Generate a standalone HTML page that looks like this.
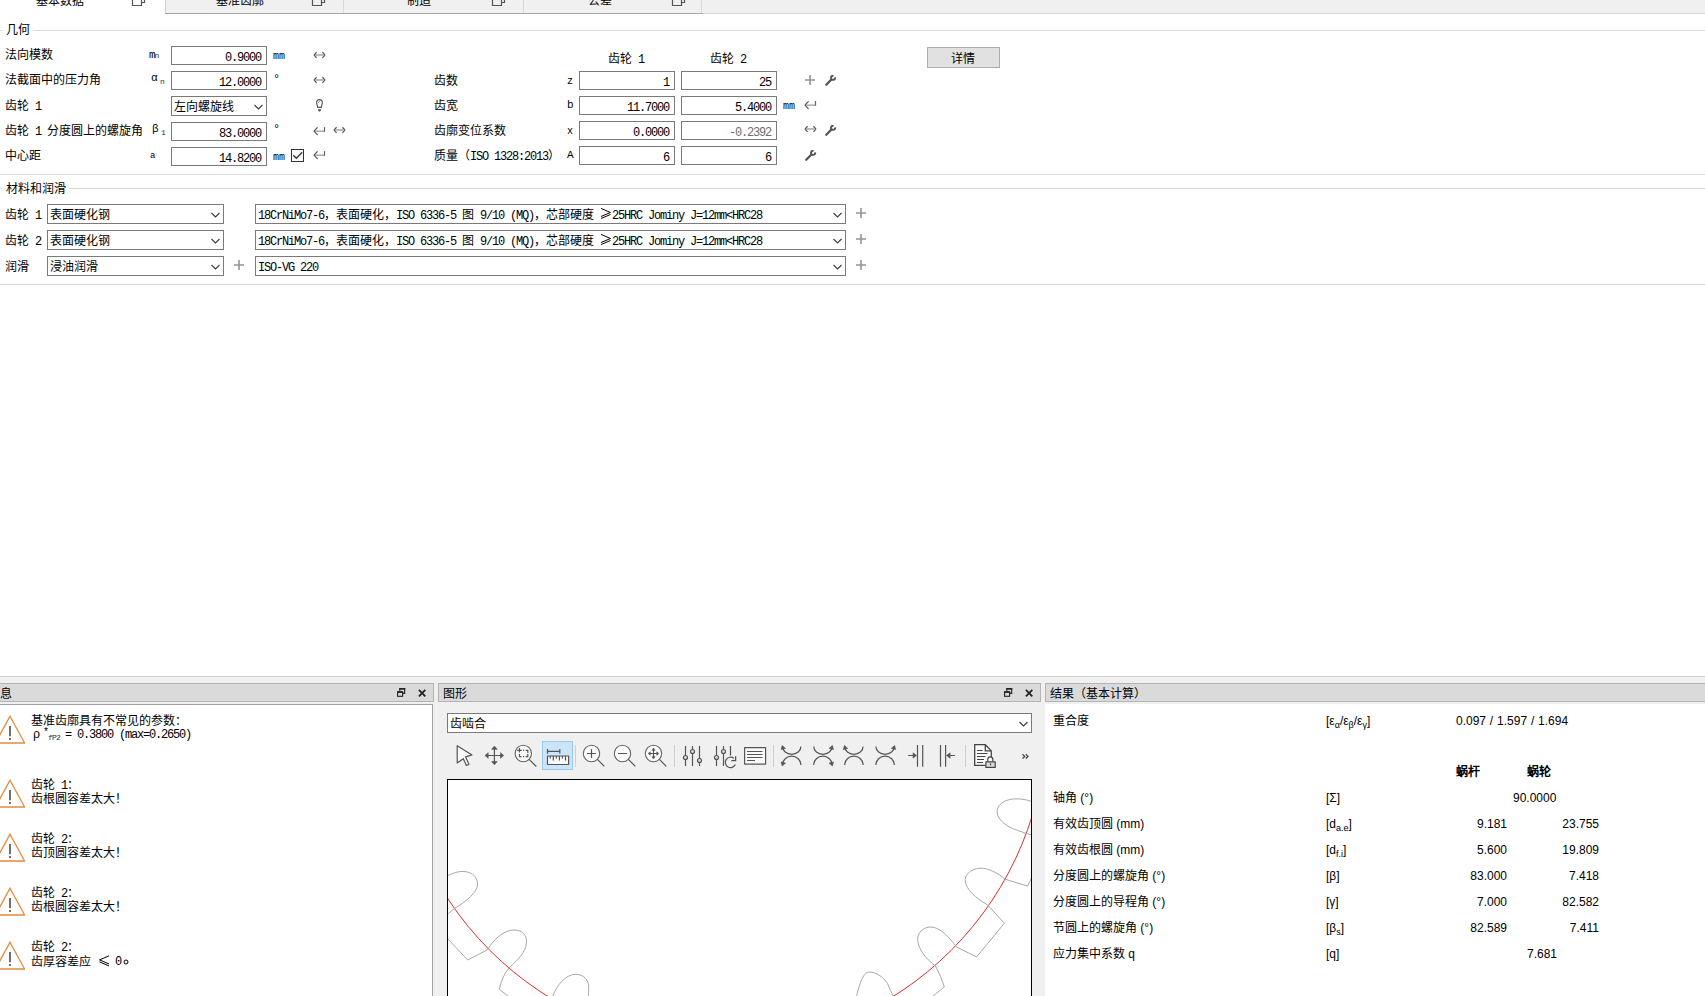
<!DOCTYPE html>
<html lang="zh-CN"><head><meta charset="utf-8">
<style>
*{box-sizing:border-box}
html,body{margin:0;padding:0}
body{width:1705px;height:996px;overflow:hidden;position:relative;background:#fff;font-family:"Liberation Sans",sans-serif;font-size:12px;color:#000}
.a{position:absolute;white-space:nowrap}
.t{position:absolute;white-space:nowrap;line-height:16px;height:16px}
.m{font-family:"Liberation Mono",monospace;letter-spacing:-1.2px}
.inp{position:absolute;border:1px solid #7a7a7a;background:#fff;height:19px;width:96px;line-height:17px;padding-top:3px;text-align:right;padding-right:5px}
.cmb{position:absolute;border:1px solid #7a7a7a;background:#fff;height:20px;line-height:18px;padding-left:2px;padding-top:1px}
.chev{position:absolute;right:3px;top:7px}
.gl{position:absolute;height:1px;background:#dcdcdc}
.hdr{position:absolute;top:683px;height:19px;background:#dadada;border:1px solid #b4b4b4;line-height:17px;padding-left:4px;padding-top:2px}
svg{position:absolute;overflow:visible}
.ic{fill:none;stroke:#707070;stroke-width:1.3}
.r{position:absolute;white-space:nowrap;line-height:16px;height:16px}
.rr{position:absolute;white-space:nowrap;line-height:16px;height:16px;text-align:right}
sub{font-size:9px;vertical-align:-3px;line-height:0}
</style></head><body>
<svg width="0" height="0" style="position:absolute">
<defs>
<symbol id="lr" viewBox="0 0 14 8"><path d="M2.2 4H10.6" stroke="#a0a0a0" stroke-width="1.4" fill="none"/><path d="M3.6 1.2Q2.4 2.2 1.1 4Q2.4 5.8 3.6 6.8M9.4 1.2Q10.6 2.2 11.9 4Q10.6 5.8 9.4 6.8" fill="none" stroke="#555" stroke-width="1.2"/></symbol>
<symbol id="ret" viewBox="0 0 14 9"><path d="M2.4 4.2H11" stroke="#a0a0a0" stroke-width="1.4" fill="none"/><path d="M11.5 0V4.8" stroke="#666" stroke-width="1.2" fill="none"/><path d="M4.6 0.4Q2.8 2 1.1 4.2Q2.8 6.3 4.6 7.8" fill="none" stroke="#555" stroke-width="1.2"/></symbol>
<symbol id="plus" viewBox="0 0 10 10"><path d="M5 0V10M0 5H10" fill="none" stroke="#959595" stroke-width="1.6"/></symbol>
<symbol id="wr" viewBox="0 0 12 12"><path d="M1.3 9.7L6.4 4.5" stroke="#555" stroke-width="2.3" stroke-linecap="round" fill="none"/><path d="M10.15 2.36A2.1 2.1 0 1 1 8.54 0.75" stroke="#555" stroke-width="1.9" fill="none"/></symbol>
</defs></svg>

<!-- tabs -->
<div class="a" style="left:165px;top:0;width:1540px;height:14px;background:#f0f0f0;border-bottom:1px solid #d8d8d8;border-left:1px solid #d0d0d0"></div><div class="a" style="left:165px;top:13px;width:538px;height:1px;background:#a8a8a8"></div>
<div class="a" style="left:343px;top:0;width:1px;height:13px;background:#d8d8d8"></div>
<div class="a" style="left:523px;top:0;width:1px;height:13px;background:#d8d8d8"></div>
<div class="a" style="left:701px;top:0;width:1px;height:13px;background:#d8d8d8"></div>
<div class="t" style="left:36px;top:-7px">基本数据</div>
<div class="t" style="left:216px;top:-7px">基准齿廓</div>
<div class="t" style="left:407px;top:-7px">制造</div>
<div class="t" style="left:588px;top:-7px">公差</div>
<svg style="left:132px;top:-7px" width="14" height="14"><path d="M0.5 3.5V12.5H9.5V3.5M9.5 9.5H12.5V0" fill="none" stroke="#555" stroke-width="1.2"/></svg>
<svg style="left:312px;top:-7px" width="14" height="14"><path d="M0.5 3.5V12.5H9.5V3.5M9.5 9.5H12.5V0" fill="none" stroke="#555" stroke-width="1.2"/></svg>
<svg style="left:492px;top:-7px" width="14" height="14"><path d="M0.5 3.5V12.5H9.5V3.5M9.5 9.5H12.5V0" fill="none" stroke="#555" stroke-width="1.2"/></svg>
<svg style="left:672px;top:-7px" width="14" height="14"><path d="M0.5 3.5V12.5H9.5V3.5M9.5 9.5H12.5V0" fill="none" stroke="#555" stroke-width="1.2"/></svg>

<!-- group geometry -->
<div class="gl" style="left:0;top:30px;width:3px"></div>
<div class="gl" style="left:33px;top:30px;width:1672px"></div>
<div class="t" style="left:6px;top:22px">几何</div>

<div class="t" style="left:5px;top:47px">法向模数</div>
<div class="t" style="left:5px;top:72px">法截面中的压力角</div>
<div class="t" style="left:5px;top:98px">齿轮<span class="m"> 1</span></div>
<div class="t" style="left:5px;top:123px">齿轮<span class="m"> 1 </span>分度圆上的螺旋角</div>
<div class="t" style="left:5px;top:148px">中心距</div>

<div class="t m" style="left:149px;top:47px;font-size:11px">m<span style="font-size:8px;color:#234">n</span></div>
<div class="t m" style="left:151px;top:70px;font-size:11px">α<span style="font-size:8px;color:#234;vertical-align:-3px"> n</span></div>
<div class="t m" style="left:152px;top:121px;font-size:11px">β<span style="font-size:8px;color:#234;vertical-align:-3px"> 1</span></div>
<div class="t m" style="left:150px;top:148px;font-size:9px">a</div>

<div class="inp m" style="left:171px;top:46px">0.9000</div>
<div class="inp m" style="left:171px;top:71px">12.0000</div>
<div class="cmb" style="left:171px;top:96px;width:96px;height:20px">左向螺旋线<svg class="chev" width="9" height="7"><path d="M0.5 1L4.5 5L8.5 1" fill="none" stroke="#3a3a3a" stroke-width="1.1"/></svg></div>
<div class="inp m" style="left:171px;top:122px">83.0000</div>
<div class="inp m" style="left:171px;top:147px">14.8200</div>

<div class="t m" style="left:273px;top:49px;font-size:10px;letter-spacing:0">mm</div>
<div class="t m" style="left:273px;top:72px">°</div>
<div class="t m" style="left:273px;top:122px">°</div>
<div class="t m" style="left:273px;top:150px;font-size:10px;letter-spacing:0">mm</div>

<svg style="left:313px;top:51px" width="14" height="8"><use href="#lr"/></svg>
<svg style="left:313px;top:76px" width="14" height="8"><use href="#lr"/></svg>
<svg style="left:314px;top:98px" width="11" height="15"><path d="M5.5 1.6C3.5 1.6 2.6 2.7 2.6 4.6C2.6 6.4 3.7 7.2 3.7 9.4H7.3C7.3 7.2 8.4 6.4 8.4 4.6C8.4 2.7 7.5 1.6 5.5 1.6Z" fill="none" stroke="#555" stroke-width="1.1"/><path d="M4.3 5Q4.5 3.6 5.9 3.2" fill="none" stroke="#777" stroke-width="0.8"/><path d="M4 11.2H7V12.6L5.5 13.8L4 12.6Z" fill="#555"/></svg>
<svg style="left:313px;top:127px" width="14" height="9"><use href="#ret"/></svg>
<svg style="left:333px;top:126px" width="14" height="8"><use href="#lr"/></svg>
<div class="a" style="left:291px;top:149px;width:13px;height:13px;border:1px solid #333;background:#fff"></div>
<svg style="left:291px;top:149px" width="13" height="13"><path d="M2.3 6.3L5.3 9.3L11.2 3.2" fill="none" stroke="#333" stroke-width="1.3"/></svg>
<svg style="left:313px;top:151px" width="14" height="9"><use href="#ret"/></svg>

<div class="gl" style="left:0;top:174px;width:1705px"></div>

<!-- right header -->
<div class="t" style="left:608px;top:51px">齿轮<span class="m"> 1</span></div>
<div class="t" style="left:710px;top:51px">齿轮<span class="m"> 2</span></div>
<div class="a" style="left:927px;top:47px;width:73px;height:21px;background:#e1e1e1;border:1px solid #adadad"></div><div class="t" style="left:951px;top:51px">详情</div>

<div class="t" style="left:434px;top:73px">齿数</div>
<div class="t" style="left:434px;top:98px">齿宽</div>
<div class="t" style="left:434px;top:123px">齿廓变位系数</div>
<div class="t" style="left:434px;top:148px">质量（<span class="m">ISO 1328:2013</span>）</div>
<div class="t m" style="left:567px;top:74px;font-size:10px">z</div>
<div class="t m" style="left:567px;top:97px;font-size:11px">b</div>
<div class="t m" style="left:567px;top:124px;font-size:10px">x</div>
<div class="t m" style="left:567px;top:147px;font-size:11px">A</div>

<div class="inp m" style="left:579px;top:71px">1</div>
<div class="inp m" style="left:681px;top:71px">25</div>
<div class="inp m" style="left:579px;top:96px">11.7000</div>
<div class="inp m" style="left:681px;top:96px">5.4000</div>
<div class="inp m" style="left:579px;top:121px">0.0000</div>
<div class="inp m" style="left:681px;top:121px;color:#6e6e6e">-0.2392</div>
<div class="inp m" style="left:579px;top:146px">6</div>
<div class="inp m" style="left:681px;top:146px">6</div>
<div class="t m" style="left:783px;top:99px;font-size:10px;letter-spacing:0">mm</div>

<svg style="left:805px;top:75px" width="10" height="10"><use href="#plus"/></svg>
<svg style="left:825px;top:75px" width="12" height="12"><use href="#wr"/></svg>
<svg style="left:804px;top:101px" width="14" height="9"><use href="#ret"/></svg>
<svg style="left:804px;top:125px" width="14" height="8"><use href="#lr"/></svg>
<svg style="left:825px;top:125px" width="12" height="12"><use href="#wr"/></svg>
<svg style="left:805px;top:150px" width="12" height="12"><use href="#wr"/></svg>

<!-- group material -->
<div class="gl" style="left:0;top:188px;width:2px"></div>
<div class="gl" style="left:69px;top:188px;width:1636px"></div>
<div class="t" style="left:6px;top:181px">材料和润滑</div>
<div class="t" style="left:5px;top:207px">齿轮<span class="m"> 1</span></div>
<div class="t" style="left:5px;top:233px">齿轮<span class="m"> 2</span></div>
<div class="t" style="left:5px;top:259px">润滑</div>
<div class="cmb" style="left:47px;top:204px;width:177px">表面硬化钢<svg class="chev" width="9" height="7"><path d="M0.5 1L4.5 5L8.5 1" fill="none" stroke="#3a3a3a" stroke-width="1.1"/></svg></div>
<div class="cmb" style="left:47px;top:230px;width:177px">表面硬化钢<svg class="chev" width="9" height="7"><path d="M0.5 1L4.5 5L8.5 1" fill="none" stroke="#3a3a3a" stroke-width="1.1"/></svg></div>
<div class="cmb" style="left:47px;top:256px;width:177px">浸油润滑<svg class="chev" width="9" height="7"><path d="M0.5 1L4.5 5L8.5 1" fill="none" stroke="#3a3a3a" stroke-width="1.1"/></svg></div>
<svg style="left:234px;top:260px" width="10" height="10"><use href="#plus"/></svg>
<div class="cmb" style="left:255px;top:204px;width:591px"><span class="m">18CrNiMo7-6</span>，表面硬化，<span class="m">ISO 6336-5 </span>图<span class="m"> 9/10 (MQ)</span>，芯部硬度<span class="m"> </span><span style="display:inline-block;width:12px"></span><span class="m">25HRC Jominy J=12mm&lt;HRC28</span><svg class="chev" width="9" height="7"><path d="M0.5 1L4.5 5L8.5 1" fill="none" stroke="#3a3a3a" stroke-width="1.1"/></svg></div>
<div class="cmb" style="left:255px;top:230px;width:591px"><span class="m">18CrNiMo7-6</span>，表面硬化，<span class="m">ISO 6336-5 </span>图<span class="m"> 9/10 (MQ)</span>，芯部硬度<span class="m"> </span><span style="display:inline-block;width:12px"></span><span class="m">25HRC Jominy J=12mm&lt;HRC28</span><svg class="chev" width="9" height="7"><path d="M0.5 1L4.5 5L8.5 1" fill="none" stroke="#3a3a3a" stroke-width="1.1"/></svg></div>
<div class="cmb" style="left:255px;top:256px;width:591px"><span class="m">ISO-VG 220</span><svg class="chev" width="9" height="7"><path d="M0.5 1L4.5 5L8.5 1" fill="none" stroke="#3a3a3a" stroke-width="1.1"/></svg></div>
<svg style="left:600px;top:207px" width="12" height="13"><path d="M1 1.4L10.5 5.5L1 9.5M10.5 7.5L1 11.5" fill="none" stroke="#000" stroke-width="1"/></svg><svg style="left:600px;top:233px" width="12" height="13"><path d="M1 1.4L10.5 5.5L1 9.5M10.5 7.5L1 11.5" fill="none" stroke="#000" stroke-width="1"/></svg><svg style="left:856px;top:208px" width="10" height="10"><use href="#plus"/></svg>
<svg style="left:856px;top:234px" width="10" height="10"><use href="#plus"/></svg>
<svg style="left:856px;top:260px" width="10" height="10"><use href="#plus"/></svg>
<div class="gl" style="left:0;top:284px;width:1705px"></div>

<!-- bottom area -->
<div class="a" style="left:0;top:676px;width:1705px;height:320px;background:#f0f0f0;border-top:1px solid #d4d4d4"></div>
<div class="hdr" style="left:-1px;width:435px;padding-left:0">息</div>
<div class="hdr" style="left:438px;width:603px">图形</div>
<div class="hdr" style="left:1045px;width:662px">结果（基本计算）</div>
<div class="a" style="left:-1px;top:704px;width:434px;height:300px;background:#fff;border:1px solid #a0a0a0"></div>
<div class="a" style="left:1045px;top:704px;width:660px;height:300px;background:#fff"></div>

<div class="cmb" style="left:447px;top:713px;width:585px">齿啮合<svg class="chev" width="9" height="7"><path d="M0.5 1L4.5 5L8.5 1" fill="none" stroke="#3a3a3a" stroke-width="1.1"/></svg></div>
<div class="a" style="left:447px;top:779px;width:585px;height:230px;background:#fff;border:1px solid #000"></div>

<!-- message panel content -->
<svg style="left:0;top:0" width="1" height="1"><defs>
<symbol id="warn" viewBox="-5 0 30 30"><path d="M10 1.2L24.6 28H-4.6Z" fill="none" stroke="#e8893a" stroke-width="1.3" stroke-linejoin="miter"/><path d="M10 11V21.2M10 23V25" stroke="#333" stroke-width="1.4"/></symbol>
</defs></svg>
<svg style="left:-5px;top:715px" width="30" height="30"><use href="#warn"/></svg>
<svg style="left:-5px;top:779px" width="30" height="30"><use href="#warn"/></svg>
<svg style="left:-5px;top:833px" width="30" height="30"><use href="#warn"/></svg>
<svg style="left:-5px;top:887px" width="30" height="30"><use href="#warn"/></svg>
<svg style="left:-5px;top:941px" width="30" height="30"><use href="#warn"/></svg>
<div class="t" style="left:31px;top:713px">基准齿廓具有不常见的参数：</div>
<div class="t m" style="left:33px;top:727px">ρ</div><div class="t m" style="left:43px;top:725px;font-size:10px">*</div><div class="t m" style="left:48px;top:730px;font-size:8px;letter-spacing:-0.8px;color:#234">fP2</div><div class="t m" style="left:65px;top:727px">= 0.3800 (max=0.2650)</div>
<div class="t" style="left:31px;top:777px">齿轮<span class="m"> 1</span>：</div>
<div class="t" style="left:31px;top:791px">齿根圆容差太大！</div>
<div class="t" style="left:31px;top:831px">齿轮<span class="m"> 2</span>：</div>
<div class="t" style="left:31px;top:845px">齿顶圆容差太大！</div>
<div class="t" style="left:31px;top:885px">齿轮<span class="m"> 2</span>：</div>
<div class="t" style="left:31px;top:899px">齿根圆容差太大！</div>
<div class="t" style="left:31px;top:939px">齿轮<span class="m"> 2</span>：</div>
<div class="t" style="left:31px;top:954px">齿厚容差应</div><svg style="left:99px;top:955px" width="12" height="12"><path d="M10 0.8L0.5 4.9L10 8.9M0.5 6.9L10 10.9" fill="none" stroke="#000" stroke-width="1"/></svg><div class="t m" style="left:115px;top:954px">0</div><svg style="left:123px;top:959px" width="6" height="6"><circle cx="3" cy="3" r="2" fill="none" stroke="#000" stroke-width="1"/></svg>

<!-- panel header buttons -->
<svg style="left:397px;top:687px" width="10" height="11"><path d="M2.8 4.5V1.6H7.7V6.4H6" stroke="#222" stroke-width="1.1" fill="none"/><rect x="2.3" y="1.1" width="5.9" height="1.5" fill="#222"/><rect x="0.6" y="4.9" width="5" height="4.4" stroke="#222" stroke-width="1.1" fill="none"/><rect x="0.1" y="4.4" width="6" height="1.5" fill="#222"/></svg>
<svg style="left:418px;top:689px" width="9" height="9"><path d="M0.9 0.9L7.3 7.3M7.3 0.9L0.9 7.3" stroke="#222" stroke-width="1.8"/></svg>
<svg style="left:1004px;top:687px" width="10" height="11"><path d="M2.8 4.5V1.6H7.7V6.4H6" stroke="#222" stroke-width="1.1" fill="none"/><rect x="2.3" y="1.1" width="5.9" height="1.5" fill="#222"/><rect x="0.6" y="4.9" width="5" height="4.4" stroke="#222" stroke-width="1.1" fill="none"/><rect x="0.1" y="4.4" width="6" height="1.5" fill="#222"/></svg>
<svg style="left:1025px;top:689px" width="9" height="9"><path d="M0.9 0.9L7.3 7.3M7.3 0.9L0.9 7.3" stroke="#222" stroke-width="1.8"/></svg>

<!-- toolbar -->
<div class="a" style="left:542px;top:741px;width:31px;height:29px;background:#cce4f7;border:1px solid #99c9ef"></div>
<div class="a" style="left:575px;top:745px;width:1px;height:22px;background:#d0d0d0"></div>
<div class="a" style="left:674px;top:745px;width:1px;height:22px;background:#d0d0d0"></div>
<div class="a" style="left:773px;top:745px;width:1px;height:22px;background:#d0d0d0"></div>
<div class="a" style="left:965px;top:745px;width:1px;height:22px;background:#d0d0d0"></div>
<svg style="left:440px;top:740px" width="600" height="32">
<g fill="none" stroke="#555" stroke-width="1.2" stroke-linejoin="round">
<path d="M17.2 5.7V22.9L23.3 18.7L26.4 25.5L28.9 24.4L25.6 16.8L32 14.9Z" fill="#fafafa"/>
<path d="M54.4 8V23M47 15.5H62"/>
<path d="M51.6 9.3L54.4 6.1L57.2 9.3ZM51.6 21.6L54.4 24.8L57.2 21.6ZM48.2 12.7L45 15.5L48.2 18.3ZM60.5 12.7L63.7 15.5L60.5 18.3Z" fill="#555" stroke-width="0.6"/>
<circle cx="83.3" cy="13.5" r="8.2" fill="#fafafa" stroke="#666" stroke-width="1.1"/><path d="M89.2 19.4L96.3 26.5"/>
<path d="M79.5 8V12.6M77.2 10.3H81.8M83 10.3H84.2M85.6 10.3H87.8V12.9M87.8 14.1V16.7H85.6M84.2 16.7H83M81.5 16.7H79.5V14.1" stroke-width="1.2" stroke-linejoin="miter"/>
<path d="M107.5 16H128.6V24.5H107.5Z" fill="#fafafa"/>
<path d="M107.5 9.1V13.7M107.5 11.4H119.8M119.8 9.1V13.7"/>
<path d="M110.3 16V18.5M113.3 16V20.5M116.3 16V18.5M119.4 16V20.5M122.4 16V18.5M125.5 16V20.5"/>
<circle cx="151.5" cy="13.5" r="8.2" fill="#fafafa" stroke="#666" stroke-width="1.1"/><path d="M157.4 19.4L164.3 26.3M147.1 13.5H155.9M151.5 9.1V17.9"/>
<circle cx="182.5" cy="13.5" r="8.2" fill="#fafafa" stroke="#666" stroke-width="1.1"/><path d="M188.4 19.4L195.3 26.3M178 13.5H187"/>
<circle cx="213.5" cy="13.5" r="8.2" fill="#fafafa" stroke="#666" stroke-width="1.1"/><path d="M219.4 19.4L226.3 26.3M213.5 10V17M210 13.5H217"/>
<path d="M211.8 10.3L213.5 8.1L215.2 10.3ZM211.8 16.7L213.5 18.9L215.2 16.7ZM210.3 11.8L208.1 13.5L210.3 15.2ZM216.7 11.8L218.9 13.5L216.7 15.2Z" fill="#555" stroke-width="0.5"/>
<path d="M245.5 6V26M252.5 6V26M259.5 6V26"/>
<circle cx="245.5" cy="17.5" r="2" fill="#ddd"/><circle cx="252.5" cy="11.5" r="2" fill="#ddd"/><circle cx="259.5" cy="20.5" r="2" fill="#ddd"/>
<path d="M276.5 6V26M283.5 6V26M290.5 6V15.5"/>
<circle cx="276.5" cy="17.5" r="2" fill="#ddd"/><circle cx="283.5" cy="11.5" r="2" fill="#ddd"/>
<path d="M295.3 24.6A5.2 5.2 0 1 1 293.9 18.4"/><path d="M291.3 20.6H295.6V16.2" stroke-width="1.3" stroke-linejoin="miter"/>
<path d="M304.6 7.6H325.6V24.1H304.6Z" fill="#fafafa"/>
<path d="M307 11.5H322.5M307 14.5H322.5M307 17.5H322.5M307 20.5H315" stroke-width="1"/>
<path d="M342.5 6.5A9.2 7.8 0 0 0 360.9 6.5M342.5 25A9.2 8.8 0 0 1 360.9 25"/>
<path d="M342.2 5.4L341.0 9.6L345.6 8.4ZM342.2 26.1L341.0 21.9L345.6 23.1Z" fill="#555" stroke-width="0.5"/>
<path d="M373.7 6.5A9.2 7.8 0 0 0 392.1 6.5M373.7 25A9.2 8.8 0 0 1 392.1 25"/>
<path d="M392.4 5.4L393.6 9.6L389.0 8.4ZM392.4 26.1L393.6 21.9L389.0 23.1Z" fill="#555" stroke-width="0.5"/>
<path d="M404.7 6.5A9.2 7.8 0 0 0 423.1 6.5M404.7 25A9.2 8.8 0 0 1 423.1 25"/>
<path d="M404.4 5.4L403.2 9.6L407.8 8.4Z" fill="#555" stroke-width="0.5"/>
<path d="M435.9 6.5A9.2 7.8 0 0 0 454.3 6.5M435.9 25A9.2 8.8 0 0 1 454.3 25"/>
<path d="M454.6 5.4L455.8 9.6L451.2 8.4Z" fill="#555" stroke-width="0.5"/>
<path d="M468.2 15.5H473.5M477.5 5V26.8M482.7 5V26.8"/>
<path d="M476.6 15.5L473 12.8V18.2Z" fill="#555" stroke-width="0.5"/>
<path d="M500.5 5V26.8M505.6 5V26.8M509.5 15.5H515"/>
<path d="M506.5 15.5L510.1 12.8V18.2Z" fill="#555" stroke-width="0.5"/>
<path d="M534.7 4.7H545.3L551.3 10.9V21H545.5V25.3H534.7Z" fill="#fafafa" stroke="none"/>
<path d="M545.5 25.3H534.7V4.7H545.3L551.3 10.9V17M545.3 4.7V10.9H551.3" stroke="#444" stroke-width="1.3" stroke-linejoin="miter"/>
<path d="M537 10.5H542.5M537 13.5H547.5M537 16.5H545.5M537 19.5H544M537 22.5H543" stroke="#444"/>
<path d="M547.8 21.5V19.3A2.5 2.5 0 0 1 552.8 19.3V21.5" stroke="#444" stroke-width="1.2"/>
<rect x="545.9" y="21.8" width="9.3" height="5.6" fill="#dcdcdc" stroke="#444" stroke-width="1.2"/>
<path d="M550.5 23.5V25.3" stroke="#333" stroke-width="1.2"/>
<path d="M582.5 14.3L584.7 16.4L582.5 18.5M585.8 14.3L588 16.4L585.8 18.5" stroke="#444" stroke-width="1.3" stroke-linejoin="miter"/>
</g></svg>

<!-- drawing -->
<svg style="left:447px;top:779px" width="586" height="217">
<defs><clipPath id="cp"><rect x="1" y="1" width="583" height="230"/></clipPath></defs>
<g clip-path="url(#cp)" fill="none">
<circle cx="273.5" cy="-59.3" r="326.2" stroke="#d83030" stroke-width="1"/>
<g stroke="#a8a8a8" stroke-width="1">
<path d="M0 97C6 94 12 92 17 92.5C26 93 31 99 30.5 106C30 113 20 122 7.5 129.5C4 132 2 134 0 136"/>
<path d="M0 159L20.7 181L40.5 170.7"/>
<path d="M40.5 170.7C47 160 57 151 67 151C76 151 80 157 79.5 163.5C79 173 70 182 62.5 188.3C57.5 194 54 202 52.3 210.3L61 217"/>
<path d="M105.8 217C109 208 118 195.3 128.5 195.3C137 195.3 142 201 141.7 209C141.6 212 141.6 215 141.5 217"/>
<path d="M585 22.6C578 20 571 19.5 566 20C556 21 549 27 550.2 34C551 41 560 48 570.6 51.5C577 53.5 581 55 585 56"/>
<path d="M585 98L580.6 107L558.4 100.3"/>
<path d="M558.4 100.3C551 94 540 88.5 533 89.2C523 90 517 96 518.4 103C519.5 110 528 119 540.6 125.9L557.3 144.3L529.5 178L509.5 168"/>
<path d="M509.5 168C503 159 493 148 484 148C476 148 470 154 470.7 161.4C471.5 170 478 179 488.4 187C492 193 495 201 497.3 208L486 217"/>
<path d="M409.6 217C412 207 416 193 422 193C430 193 437 199 440.7 204.7C442 209 445 214 446 217"/>
</g></g></svg>

<!-- results -->
<div class="r" style="left:1053px;top:713px">重合度</div>
<div class="r" style="left:1326px;top:713px">[ε<sub>α</sub>/ε<sub>β</sub>/ε<sub>γ</sub>]</div>
<div class="r" style="left:1456px;top:713px;word-spacing:0.5px">0.097 / 1.597 / 1.694</div>
<div class="r" style="left:1456px;top:764px;font-weight:bold">蜗杆</div>
<div class="r" style="left:1527px;top:764px;font-weight:bold">蜗轮</div>
<div class="r" style="left:1053px;top:790px">轴角 (°)</div>
<div class="r" style="left:1326px;top:790px">[Σ]</div>
<div class="r" style="left:1513px;top:790px">90.0000</div>
<div class="r" style="left:1053px;top:816px">有效齿顶圆 (mm)</div>
<div class="r" style="left:1326px;top:816px">[d<sub>a.e</sub>]</div>
<div class="rr" style="left:1407px;top:816px;width:100px">9.181</div>
<div class="rr" style="left:1499px;top:816px;width:100px">23.755</div>
<div class="r" style="left:1053px;top:842px">有效齿根圆 (mm)</div>
<div class="r" style="left:1326px;top:842px">[d<sub>f.i</sub>]</div>
<div class="rr" style="left:1407px;top:842px;width:100px">5.600</div>
<div class="rr" style="left:1499px;top:842px;width:100px">19.809</div>
<div class="r" style="left:1053px;top:868px">分度圆上的螺旋角 (°)</div>
<div class="r" style="left:1326px;top:868px">[β]</div>
<div class="rr" style="left:1407px;top:868px;width:100px">83.000</div>
<div class="rr" style="left:1499px;top:868px;width:100px">7.418</div>
<div class="r" style="left:1053px;top:894px">分度圆上的导程角 (°)</div>
<div class="r" style="left:1326px;top:894px">[γ]</div>
<div class="rr" style="left:1407px;top:894px;width:100px">7.000</div>
<div class="rr" style="left:1499px;top:894px;width:100px">82.582</div>
<div class="r" style="left:1053px;top:920px">节圆上的螺旋角 (°)</div>
<div class="r" style="left:1326px;top:920px">[β<sub>s</sub>]</div>
<div class="rr" style="left:1407px;top:920px;width:100px">82.589</div>
<div class="rr" style="left:1499px;top:920px;width:100px">7.411</div>
<div class="r" style="left:1053px;top:946px">应力集中系数 q</div>
<div class="r" style="left:1326px;top:946px">[q]</div>
<div class="r" style="left:1527px;top:946px">7.681</div>
</body></html>
